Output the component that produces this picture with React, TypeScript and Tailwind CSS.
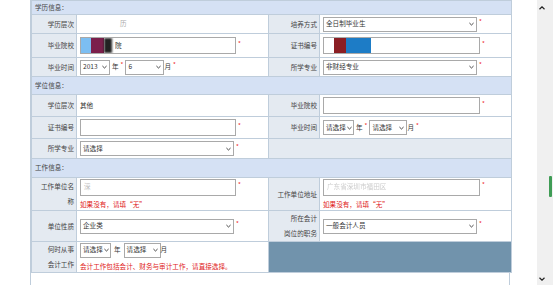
import type { ReactNode } from 'react'

const Star = () => (
  <span className="relative -top-[2px] ml-[2px] text-[6px] leading-none text-[#e22]">*</span>
)

const Chevron = () => (
  <svg width="5" height="4" viewBox="0 0 6 4" className="shrink-0">
    <path d="M0.5 0.8 L3 3.2 L5.5 0.8" fill="none" stroke="#333" strokeWidth="1.1" />
  </svg>
)

function Sel({ w, text }: { w: string; text: string }) {
  return (
    <div className={`flex h-[15px] items-center justify-between gap-[1px] whitespace-nowrap border border-[#a9a9a9] bg-white pl-[2px] pr-[2px] ${w}`}>
      <span>{text}</span>
      <Chevron />
    </div>
  )
}

function Box({ w, children }: { w: string; children?: ReactNode }) {
  return (
    <div className={`flex h-[17px] items-center overflow-hidden border border-[#a9a9a9] bg-white ${w}`}>
      {children}
    </div>
  )
}

function Label({ children }: { children: ReactNode }) {
  return (
    <td className="border border-[#bfcddb] bg-[#e4eaf1] pr-[2px] text-right align-middle leading-[15px] text-[#444]">
      {children}
    </td>
  )
}

function Val({ children }: { children?: ReactNode }) {
  return <td className="border border-[#bfcddb] bg-white pl-[3px] align-middle">{children}</td>
}

function Head({ title, h }: { title: string; h: string }) {
  return (
    <tr className={h}>
      <td colSpan={4} className="border border-[#bfcddb] bg-[#d5e1f4] pl-[3px] text-[#444]">
        {title}
      </td>
    </tr>
  )
}

const Hint = ({ children }: { children: ReactNode }) => (
  <div className="mt-[2px] leading-[12px] text-[#e02020]">{children}</div>
)

export default function App() {
  return (
    <div
      className="flex h-[285px] w-[553px] overflow-hidden bg-white text-[6.6px] text-[#333]"
      style={{ fontFamily: '"Noto Sans CJK SC", "Noto Sans", sans-serif' }}
    >
      <div className="w-[30px] shrink-0" />
      <div className="flex w-[480px] shrink-0 flex-col border-x border-[#bfcddb]">
        <table className="w-full table-fixed border-collapse">
          <colgroup>
            <col className="w-[45px]" />
            <col className="w-[192px]" />
            <col className="w-[51px]" />
            <col className="w-[192px]" />
          </colgroup>
          <tbody>
            <Head title="学历信息：" h="h-[14px]" />
            <tr className="h-[19px]">
              <Label>学历层次</Label>
              <Val>
                <span className="ml-[40px] text-[#aaa]">历</span>
              </Val>
              <Label>培养方式</Label>
              <Val>
                <div className="flex items-center">
                  <Sel w="w-[154px]" text="全日制毕业生" />
                  <Star />
                </div>
              </Val>
            </tr>
            <tr className="h-[24px]">
              <Label>毕业院校</Label>
              <Val>
                <div className="flex items-center">
                  <Box w="w-[156px]">
                    <div className="h-full w-[10px] bg-[#7cbef2]" />
                    <div className="h-full w-[13px] bg-[#7b1f4c]" />
                    <div className="h-full w-[8px] bg-[#222] blur-[1px]" />
                    <span className="ml-[3px]">院</span>
                  </Box>
                  <Star />
                </div>
              </Val>
              <Label>证书编号</Label>
              <Val>
                <div className="flex items-center">
                  <Box w="w-[157px]">
                    <div className="h-full w-[10px] bg-white" />
                    <div className="h-full w-[12px] bg-[#8b1e24]" />
                    <div className="h-full w-[25px] bg-[#1d7cc6]" />
                  </Box>
                  <Star />
                </div>
              </Val>
            </tr>
            <tr className="h-[19px]">
              <Label>毕业时间</Label>
              <Val>
                <div className="flex items-center">
                  <Sel w="w-[30px]" text="2013" />
                  <span className="ml-[2px]">年</span>
                  <Star />
                  <span className="w-[2px]" />
                  <Sel w="w-[39px]" text="6" />
                  <span>月</span>
                  <Star />
                </div>
              </Val>
              <Label>所学专业</Label>
              <Val>
                <div className="flex items-center">
                  <Sel w="w-[154px]" text="非财经专业" />
                  <Star />
                </div>
              </Val>
            </tr>
            <Head title="学位信息：" h="h-[18px]" />
            <tr className="h-[22px]">
              <Label>学位层次</Label>
              <Val>其他</Val>
              <Label>毕业院校</Label>
              <Val>
                <div className="flex items-center">
                  <Box w="w-[157px]" />
                  <Star />
                </div>
              </Val>
            </tr>
            <tr className="h-[22px]">
              <Label>证书编号</Label>
              <Val>
                <div className="flex items-center">
                  <Box w="w-[156px]" />
                  <Star />
                </div>
              </Val>
              <Label>毕业时间</Label>
              <Val>
                <div className="flex items-center">
                  <Sel w="w-[31px]" text="请选择" />
                  <span className="ml-[2px]">年</span>
                  <Star />
                  <span className="w-[2px]" />
                  <Sel w="w-[38px]" text="请选择" />
                  <span>月</span>
                  <Star />
                </div>
              </Val>
            </tr>
            <tr className="h-[20px]">
              <Label>所学专业</Label>
              <Val>
                <div className="flex items-center">
                  <Sel w="w-[154px]" text="请选择" />
                  <Star />
                </div>
              </Val>
              <td colSpan={2} className="border border-[#bfcddb] bg-[#e4eaf1]" />
            </tr>
            <Head title="工作信息：" h="h-[19px]" />
            <tr className="h-[33px]">
              <Label>
                工作单位名
                <br />称
              </Label>
              <Val>
                <div className="flex items-center">
                  <Box w="w-[156px]">
                    <span className="ml-[3px] text-[#bbb]">深</span>
                  </Box>
                  <Star />
                </div>
                <Hint>如果没有，请填“无”</Hint>
              </Val>
              <Label>工作单位地址</Label>
              <Val>
                <div className="flex items-center">
                  <Box w="w-[157px]">
                    <span className="ml-[3px] text-[#ccc] blur-[0.5px]">广东省深圳市福田区</span>
                  </Box>
                  <Star />
                </div>
                <Hint>如果没有，请填“无”</Hint>
              </Val>
            </tr>
            <tr className="h-[30px]">
              <Label>单位性质</Label>
              <Val>
                <div className="flex items-center">
                  <Sel w="w-[154px]" text="企业类" />
                  <Star />
                </div>
              </Val>
              <Label>
                所在会计
                <br />
                岗位的职务
              </Label>
              <Val>
                <div className="flex items-center">
                  <Sel w="w-[154px]" text="一般会计人员" />
                  <Star />
                </div>
              </Val>
            </tr>
            <tr className="h-[30px]">
              <Label>
                何时从事
                <br />
                会计工作
              </Label>
              <Val>
                <div className="flex items-center">
                  <Sel w="w-[31px]" text="请选择" />
                  <span className="mx-[3px]">年</span>
                  <Sel w="w-[37px]" text="请选择" />
                  <span>月</span>
                </div>
                <Hint>会计工作包括会计、财务与审计工作，请直接选择。</Hint>
              </Val>
              <td colSpan={2} className="border border-[#bfcddb] bg-[#7193ac]" />
            </tr>
          </tbody>
        </table>
      </div>
      <div className="w-[27px] shrink-0" />
      <div className="relative flex w-[16px] shrink-0 flex-col items-start justify-between bg-[#f0f0f0] pb-[4px] pl-[2px] pt-[6px]">
        <svg width="6" height="4" viewBox="0 0 6 4">
          <path d="M0.5 3.2 L3 0.8 L5.5 3.2" fill="none" stroke="#222" strokeWidth="1.2" />
        </svg>
        <div className="absolute left-[12px] top-[176px] h-[21px] w-[3px] rounded-[1px] bg-[#3f9c55]" />
        <svg width="6" height="4" viewBox="0 0 6 4">
          <path d="M0.5 0.8 L3 3.2 L5.5 0.8" fill="none" stroke="#222" strokeWidth="1.2" />
        </svg>
      </div>
    </div>
  )
}
